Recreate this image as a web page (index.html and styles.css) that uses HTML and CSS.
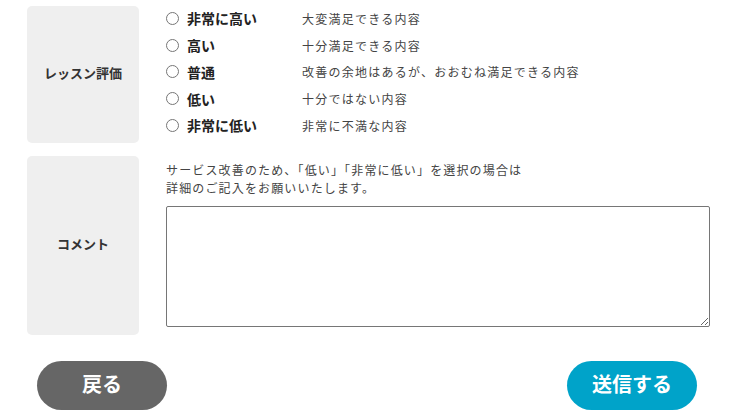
FILE: index.html
```html
<!DOCTYPE html>
<html lang="ja">

<head>
  <meta charset="UTF-8" />
  <meta name="viewport" content="width=device-width, initial-scale=1.0" />
  <title>レッスン評価</title>
  <link rel="stylesheet" href="styles.css">
</head>

<body>
  <form class="form-wrap">
    <div class="form-row">
      <div class="form-label">レッスン評価</div>
      <ul class="rating-list">
        <li class="rating-item">
          <label class="rating-name"><input type="radio" name="rating" value="5">非常に高い</label>
          <span class="rating-desc">大変満足できる内容</span>
        </li>
        <li class="rating-item">
          <label class="rating-name"><input type="radio" name="rating" value="4">高い</label>
          <span class="rating-desc">十分満足できる内容</span>
        </li>
        <li class="rating-item">
          <label class="rating-name"><input type="radio" name="rating" value="3">普通</label>
          <span class="rating-desc">改善の余地はあるが、おおむね満足できる内容</span>
        </li>
        <li class="rating-item">
          <label class="rating-name"><input type="radio" name="rating" value="2">低い</label>
          <span class="rating-desc">十分ではない内容</span>
        </li>
        <li class="rating-item">
          <label class="rating-name"><input type="radio" name="rating" value="1">非常に低い</label>
          <span class="rating-desc">非常に不満な内容</span>
        </li>
      </ul>
    </div>

    <div class="form-row">
      <div class="form-label">コメント</div>
      <div class="comment-cell">
        <p class="comment-note">サービス改善のため、「低い」「非常に低い」を選択の場合は<br>詳細のご記入をお願いいたします。</p>
        <textarea class="comment-box" name="comment"></textarea>
      </div>
    </div>

    <div class="btn-row">
      <button type="button" class="btn btn-back">戻る</button>
      <button type="submit" class="btn btn-submit">送信する</button>
    </div>
  </form>
</body>

</html>
```

FILE: styles.css
```css
* {
  box-sizing: border-box;
  margin: 0;
  padding: 0;
}

body {
  background-color: #fff;
  color: #222;
  font-family: "Noto Sans CJK JP", "Noto Sans", sans-serif;
}

.form-wrap {
  padding: 6px 34px 0 27px;
}

.form-row {
  display: grid;
  grid-template-columns: 112px 1fr;
  column-gap: 27px;
  margin-bottom: 13px;
}

.form-label {
  background-color: #efefef;
  border-radius: 5px;
  display: flex;
  align-items: center;
  justify-content: center;
  padding-bottom: 4px;
  font-size: 13px;
  font-weight: bold;
  color: #333;
}

.rating-list {
  list-style: none;
  margin-top: -1px;
  padding-bottom: 4px;
}

.rating-item {
  display: flex;
  align-items: center;
  height: 26.75px;
}

.rating-name {
  display: flex;
  align-items: center;
  width: 136px;
  font-size: 14px;
  font-weight: bold;
  color: #222;
}

.rating-name input {
  width: 13px;
  height: 13px;
  margin: 0 8px 0 0;
}

.rating-desc {
  font-size: 12px;
  letter-spacing: 1.25px;
  color: #444;
}

.comment-cell {
  padding: 5px 0 8px;
}

.comment-note {
  font-size: 12px;
  line-height: 18px;
  letter-spacing: 1.15px;
  color: #444;
  margin-bottom: 9px;
}

.comment-box {
  display: block;
  width: 100%;
  height: 121px;
  border: 1px solid #767676;
  border-radius: 2px;
  resize: vertical;
}

.btn-row {
  display: flex;
  justify-content: space-between;
  padding: 13px 13px 0 10px;
}

.btn {
  width: 130px;
  height: 49px;
  border: none;
  border-radius: 25px;
  padding-bottom: 3px;
  color: #fff;
  font-family: inherit;
  font-size: 20px;
  font-weight: bold;
  cursor: pointer;
}

.btn-back {
  background: #666;
}

.btn-submit {
  background: #00a3c9;
}
```
